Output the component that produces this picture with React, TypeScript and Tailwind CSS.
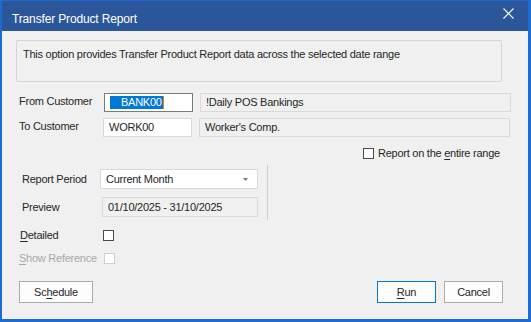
import React from 'react';

const font = { fontFamily: '"Liberation Sans", Arial, sans-serif' };

function Check({ disabled }: { disabled?: boolean }) {
  return (
    <span
      className={
        'inline-block w-[11px] h-[11px] border bg-white ' +
        (disabled ? 'border-[#cfcfcf]' : 'border-[#4a4a4a]')
      }
    />
  );
}

export default function App() {
  return (
    <div
      className="w-[531px] h-[322px] bg-[#1c6bd0] pl-[2px] pr-[3px] pb-[3px] pt-[1px] flex flex-col text-[11px] tracking-[-0.25px] text-[#262626]"
      style={font}
    >
      {/* Title bar */}
      <div className="h-[30px] bg-[#2b579a] flex items-center justify-between pl-[10px] pr-[14px] shrink-0">
        <span className="text-white text-[12px] tracking-[-0.15px] mt-[5px]">Transfer Product Report</span>
        <svg width="11" height="11" viewBox="0 0 11 11" className="mb-[5px]">
          <path d="M0.5 0.5 L10.5 10.5 M10.5 0.5 L0.5 10.5" stroke="white" strokeWidth="1.1" />
        </svg>
      </div>

      {/* Body */}
      <div className="flex-1 bg-[#f0f0f0] flex flex-col pl-[14px]">
        <div className="mt-[9px] w-[486px] h-[42px] border border-[#d5d5d5] rounded-[2px] px-[6px] pt-[5px]">
          This option provides Transfer Product Report data across the selected date range
        </div>

        {/* From Customer */}
        <div className="flex items-center mt-[11px] h-[19px]">
          <span className="w-[88px] pl-[3px] -mt-[3px]">From Customer</span>
          <div className="w-[89px] h-[19px] border border-[#7a7a7a] bg-white flex items-center pl-[5px]">
            <span className="bg-[#0078d7] text-white pl-[11px] pr-[1px] h-[13px] leading-[13px] flex items-center">BANK00</span>
            <span className="w-[1px] h-[13px] bg-[#f07a10]" />
          </div>
          <div className="ml-[7px] w-[311px] h-[19px] border border-[#d9d9d9] bg-[#f0f0f0] flex items-center pl-[5px]">
            !Daily POS Bankings
          </div>
        </div>

        {/* To Customer */}
        <div className="flex items-center mt-[6px] h-[19px]">
          <span className="w-[87px] pl-[3px] -mt-[3px]">To Customer</span>
          <div className="w-[89px] h-[19px] border border-[#d9d9d9] bg-white flex items-center pl-[5px]">
            WORK00
          </div>
          <div className="ml-[7px] w-[311px] h-[19px] border border-[#d9d9d9] bg-[#f0f0f0] flex items-center pl-[5px]">
            Worker's Comp.
          </div>
        </div>

        {/* Entire range */}
        <div className="flex items-center mt-[11px] ml-[347px] gap-[4px] h-[11px]">
          <Check />
          <span>
            Report on the <span className="underline underline-offset-2">e</span>ntire range
          </span>
        </div>

        {/* Period + Preview */}
        <div className="flex mt-[6px]">
          <div className="flex flex-col">
            <div className="flex items-center mt-[4px] h-[20px]">
              <span className="w-[84px] pl-[6px]">Report Period</span>
              <div className="w-[158px] h-[20px] border border-[#d9d9d9] bg-white flex items-center justify-between pl-[5px] pr-[9px]">
                <span>Current Month</span>
                <svg width="5" height="3" viewBox="0 0 5 3">
                  <path d="M0 0 H5 L2.5 3 Z" fill="#7a7a7a" />
                </svg>
              </div>
            </div>
            <div className="flex items-center mt-[8px] h-[20px]">
              <span className="w-[86px] pl-[6px]">Preview</span>
              <div className="w-[156px] h-[20px] border border-[#d9d9d9] bg-[#f0f0f0] flex items-center pl-[5px]">
                01/10/2025 - 31/10/2025
              </div>
            </div>
          </div>
          <div className="ml-[9px] w-[1px] h-[55px] bg-[#d0d0d0]" />
        </div>

        {/* Detailed */}
        <div className="flex items-center mt-[10px] h-[11px]">
          <span className="w-[87px] pl-[4px]">
            <span className="underline underline-offset-2">D</span>etailed
          </span>
          <Check />
        </div>

        {/* Show Reference */}
        <div className="flex items-center mt-[12px] h-[11px] text-[#a8a8a8]">
          <span className="w-[88px] pl-[3px]">
            <span className="underline underline-offset-2">S</span>how Reference
          </span>
          <Check disabled />
        </div>

        {/* Buttons */}
        <div className="flex items-center mt-[17px] w-[487px]">
          <button className="w-[74px] h-[22px] ml-[3px] border border-[#adadad] bg-[#fdfdfd] text-[11px]">
            Sc<span className="underline underline-offset-2">h</span>edule
          </button>
          <div className="flex-1" />
          <button className="w-[59px] h-[22px] border border-[#0078d7] bg-[#fdfdfd] text-[11px]">
            <span className="underline underline-offset-2">R</span>un
          </button>
          <button className="w-[59px] h-[22px] ml-[8px] border border-[#adadad] bg-[#fdfdfd] text-[11px]">
            Cancel
          </button>
        </div>
      </div>
    </div>
  );
}
